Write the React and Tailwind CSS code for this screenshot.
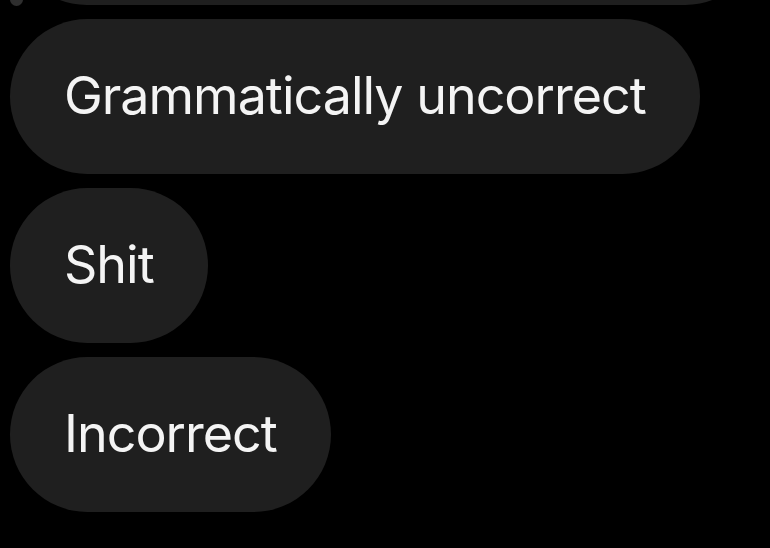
export default function App() {
  const replies = ["Grammatically uncorrect", "Shit", "Incorrect"];

  return (
    <div className="relative w-[770px] h-[548px] overflow-hidden bg-black font-['Inter',sans-serif]">
      {/* reply marker peeking in at the top */}
      <div className="absolute left-[10px] top-[-7px] w-[13px] h-[13px] rounded-full bg-[#2e2e2e]" />

      <div className="flex flex-col items-start gap-[14px] pl-[10px]">
        <div className="mt-[-150px] h-[155px] w-[752px] rounded-[77px] bg-[#1f1f1f]" />
        {replies.map((text) => (
          <div
            key={text}
            className="flex h-[155px] items-center rounded-full bg-[#1f1f1f] px-[54px] text-[52px] leading-none tracking-[-1px] text-[#f4f4f4]"
          >
            <span className="pb-[2px]">{text}</span>
          </div>
        ))}
      </div>
    </div>
  );
}
